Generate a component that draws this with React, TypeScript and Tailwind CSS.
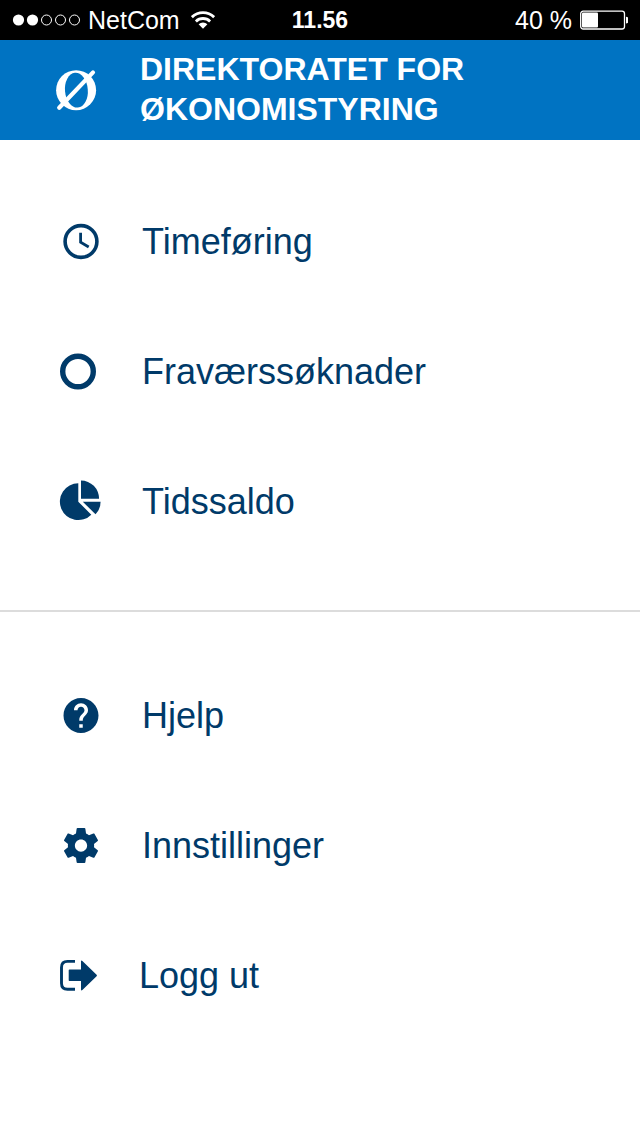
import type { ReactNode } from "react";

type MenuItem = {
  label: string;
  href: string;
  icon: ReactNode;
};

const ClockIcon = () => (
  <svg className="h-12 w-12 shrink-0" viewBox="0 0 48 48" aria-hidden="true">
    <circle cx="25" cy="23.5" r="15.9" fill="none" stroke="currentColor" strokeWidth="3.6" />
    <path d="M24.6 14.8v9.4l8.1 4.8" fill="none" stroke="currentColor" strokeWidth="2.8" />
  </svg>
);

const CircleIcon = () => (
  <svg className="h-12 w-12 shrink-0" viewBox="0 0 48 48" aria-hidden="true">
    <circle cx="22" cy="23.5" r="15.3" fill="none" stroke="currentColor" strokeWidth="5.4" />
  </svg>
);

const PieIcon = () => (
  <svg className="h-12 w-12 shrink-0" viewBox="0 0 48 48" fill="currentColor" aria-hidden="true">
    <path d="M22.3 23.7V5.3A18.4 18.4 0 1 0 35.3 36.7z" />
    <path d="M25 20.8V2.5A18.1 18.3 0 0 1 43.1 20.8z" />
    <path d="M26.8 23.7h17.8a18 18 0 0 1-5.1 12.6z" />
  </svg>
);

const HelpIcon = () => (
  <svg className="h-12 w-12 shrink-0" viewBox="0 0 48 48" fill="currentColor" aria-hidden="true">
    <path
      transform="translate(4 2.6) scale(1.75)"
      d="M12 2C6.48 2 2 6.48 2 12s4.48 10 10 10 10-4.48 10-10S17.52 2 12 2zm1 17h-2v-2h2v2zm2.07-7.75l-.9.92C13.45 12.9 13 13.5 13 15h-2v-.5c0-1.1.45-2.1 1.17-2.83l1.24-1.26c.37-.36.59-.86.59-1.41 0-1.1-.9-2-2-2s-2 .9-2 2H8c0-2.21 1.79-4 4-4s4 1.79 4 4c0 .88-.36 1.68-.93 2.25z"
    />
  </svg>
);

const GearIcon = () => (
  <svg className="h-12 w-12 shrink-0" viewBox="0 0 48 48" fill="currentColor" aria-hidden="true">
    <path
      transform="translate(4 2.6) scale(1.75)"
      d="M19.43 12.98c.04-.32.07-.64.07-.98s-.03-.66-.07-.98l2.11-1.65c.19-.15.24-.42.12-.64l-2-3.46c-.12-.22-.39-.3-.61-.22l-2.49 1c-.52-.4-1.08-.73-1.69-.98l-.38-2.65C14.46 2.18 14.25 2 14 2h-4c-.25 0-.46.18-.49.42l-.38 2.65c-.61.25-1.17.59-1.69.98l-2.49-1c-.23-.09-.49 0-.61.22l-2 3.46c-.13.22-.07.49.12.64l2.11 1.65c-.04.32-.07.65-.07.98s.03.66.07.98l-2.11 1.65c-.19.15-.24.42-.12.64l2 3.46c.12.22.39.3.61.22l2.49-1c.52.4 1.08.73 1.69.98l.38 2.65c.03.24.24.42.49.42h4c.25 0 .46-.18.49-.42l.38-2.65c.61-.25 1.17-.59 1.69-.98l2.49 1c.23.09.49 0 .61-.22l2-3.46c.12-.22.07-.49-.12-.64l-2.11-1.65zM12 15.5c-1.93 0-3.5-1.57-3.5-3.5s1.57-3.5 3.5-3.5 3.5 1.57 3.5 3.5-1.57 3.5-3.5 3.5z"
    />
  </svg>
);

const LogoutIcon = () => (
  <svg className="h-12 w-[45px] shrink-0" viewBox="0 0 45 48" fill="currentColor" aria-hidden="true">
    <path
      d="M19 9.4h-7.5q-6 0-6 6v15.8q0 6 6 6H19"
      fill="none"
      stroke="currentColor"
      strokeWidth="2.9"
    />
    <path d="M13.5 17.4H25V9.6q0-1.6 1.4-.6L40.6 22.7q.8.8 0 1.6L26.4 38q-1.4 1-1.4-.6V29H13.5q-.8 0-.8-.8v-10q0-.8.8-.8z" />
  </svg>
);

const Logo = () => (
  <svg className="h-12 w-12 shrink-0" viewBox="0 0 48 48" aria-hidden="true">
    <circle cx="20.1" cy="25.2" r="20" fill="white" />
    <ellipse cx="20.4" cy="25.2" rx="11.4" ry="17.4" transform="rotate(-5 20.4 25.2)" fill="#0073c2" />
    <path d="M3.2 42.8 37 7.4" stroke="white" strokeWidth="4.2" strokeLinecap="round" />
  </svg>
);

const mainItems: MenuItem[] = [
  { label: "Timeføring", href: "#timeforing", icon: <ClockIcon /> },
  { label: "Fraværssøknader", href: "#fravaerssoknader", icon: <CircleIcon /> },
  { label: "Tidssaldo", href: "#tidssaldo", icon: <PieIcon /> },
];

const secondaryItems: MenuItem[] = [
  { label: "Hjelp", href: "#hjelp", icon: <HelpIcon /> },
  { label: "Innstillinger", href: "#innstillinger", icon: <GearIcon /> },
  { label: "Logg ut", href: "#logg-ut", icon: <LogoutIcon /> },
];

const StatusBar = () => (
  <div className="grid h-10 grid-cols-3 items-center bg-black px-3 text-white">
    <div className="flex items-center">
      <svg className="h-4 w-[69px] shrink-0" viewBox="0 0 69 16" aria-hidden="true">
        <circle cx="6.5" cy="8" r="5.6" fill="white" />
        <circle cx="20.5" cy="8" r="5.6" fill="white" />
        <g fill="none" stroke="white">
          <circle cx="34.5" cy="8" r="5" />
          <circle cx="48.5" cy="8" r="5" />
          <circle cx="62.5" cy="8" r="5" />
        </g>
      </svg>
      <span className="ml-[7px] text-[25px] leading-10">NetCom</span>
      <svg className="ml-[11px] h-5 w-6 shrink-0" viewBox="0 0 24 20" aria-hidden="true">
        <g fill="none" stroke="white" strokeWidth="2.8">
          <path d="M.9 7.2a16 16 0 0 1 22.2 0" />
          <path d="M4.9 11.4a10.2 10.2 0 0 1 14.2 0" />
        </g>
        <path d="M7.6 14.2a6.3 6.3 0 0 1 8.8 0L12 18.8z" fill="white" />
      </svg>
    </div>
    <span className="text-center text-[23px] leading-10 font-bold">11.56</span>
    <div className="flex items-center justify-end">
      <span className="text-[25px] leading-10">40 %</span>
      <svg className="ml-2 h-5 w-12 shrink-0" viewBox="0 0 48 20" aria-hidden="true">
        <rect x=".7" y="1.2" width="43.8" height="17.8" rx="2.5" fill="none" stroke="white" strokeWidth="1.3" />
        <rect x="2" y="2.6" width="16" height="15" rx="1" fill="white" />
        <path d="M46 6.8q3 0 3 3.3t-3 3.3z" fill="white" />
      </svg>
    </div>
  </div>
);

const MenuList = ({ items }: { items: MenuItem[] }) => (
  <ul>
    {items.map((item) => (
      <li key={item.href}>
        <a href={item.href} className="flex h-[130px] items-center gap-[38px] pl-14 text-4xl">
          {item.icon}
          <span>{item.label}</span>
        </a>
      </li>
    ))}
  </ul>
);

export default function App() {
  return (
    <div className="min-h-screen bg-white font-['Liberation_Sans',Arial,sans-serif] text-[#003a69]">
      <StatusBar />
      <header className="flex items-center gap-9 bg-[#0073c2] pt-[9px] pb-[11px] pl-14 text-white">
        <Logo />
        <h1 className="text-[32px] leading-10 font-bold">
          DIREKTORATET FOR
          <br />
          ØKONOMISTYRING
        </h1>
      </header>
      <nav aria-label="Meny">
        <div className="border-b-2 border-[#dcdcdc] pt-[37px] pb-[43px]">
          <MenuList items={mainItems} />
        </div>
        <div className="pt-[39px]">
          <MenuList items={secondaryItems} />
        </div>
      </nav>
    </div>
  );
}
